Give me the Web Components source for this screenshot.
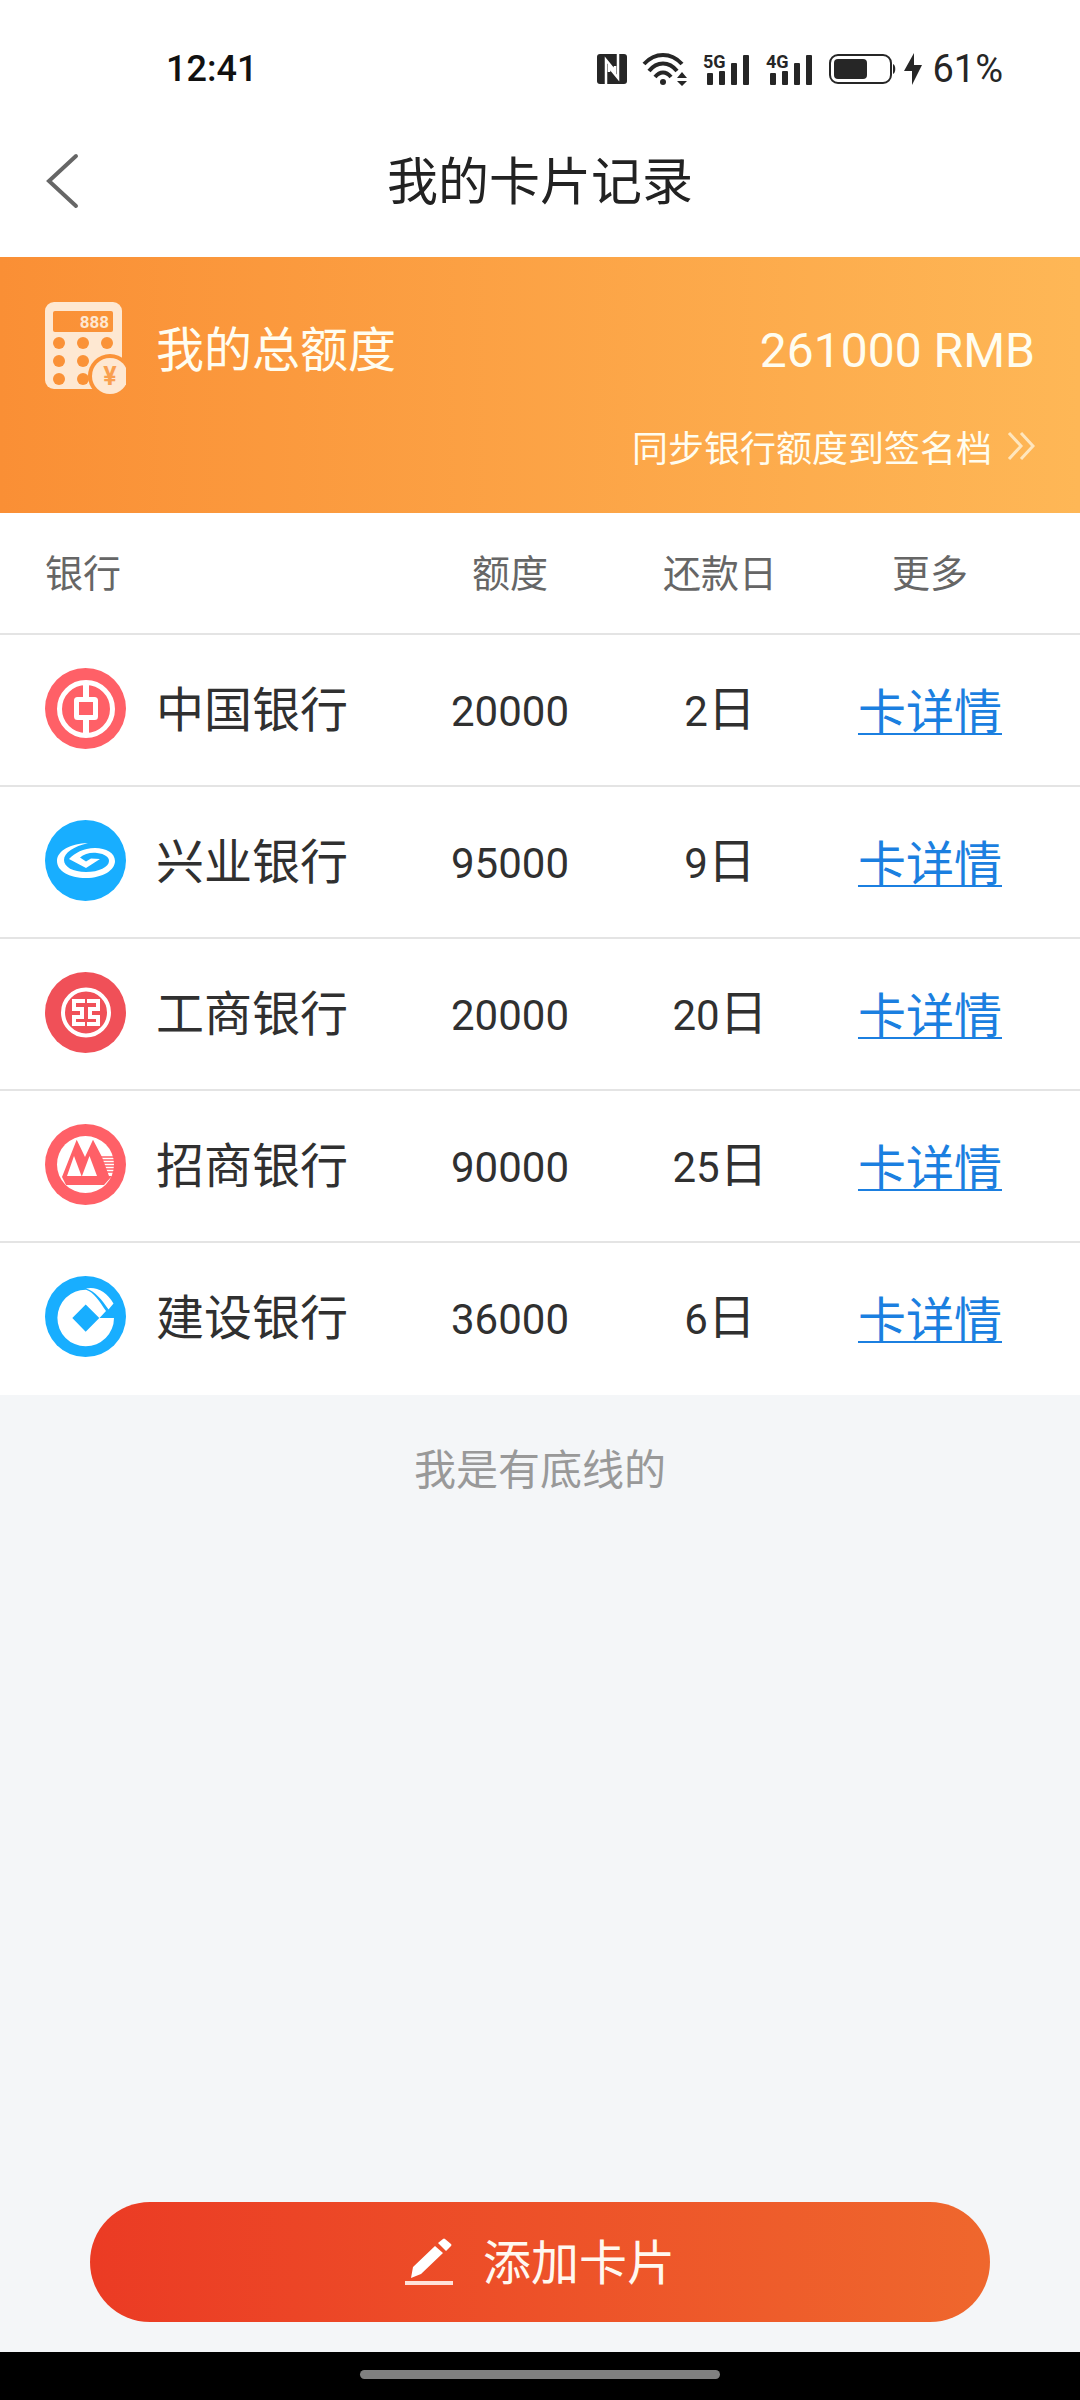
<!DOCTYPE html>
<html lang="zh-CN">
<head>
<meta charset="utf-8">
<meta name="viewport" content="width=device-width, initial-scale=1">
<title>我的卡片记录</title>
<style>
    body {
        display: flex;
        flex-direction: column;
        min-height: 100vh;
        margin: 0;
        background-color: #f4f6f8;
        color: #303030;
        font-family: "Noto Sans CJK SC", "Noto Sans", sans-serif;
    }

    main {
        flex: 1;
    }
</style>
</head>
<body>
    <status-bar time="12:41" battery="61%"></status-bar>
    <page-header>我的卡片记录</page-header>
    <main>
        <total-limit amount="261000 RMB">
            我的总额度
            <span slot="link">同步银行额度到签名档</span>
        </total-limit>
        <card-table></card-table>
        <end-note>我是有底线的</end-note>
    </main>
    <add-button>添加卡片</add-button>
    <home-bar></home-bar>

<script>
class BaseElement extends HTMLElement {
    constructor(){
        super();
        this.attachShadow({ mode: 'open' });
    }

    connectedCallback() {
        const template = document.createElement('template');
        template.innerHTML = `<style>${this.getStyles()}</style>${this.getTemplate()}`;
        this.shadowRoot.replaceChildren(template.content.cloneNode(true));
    }
}

class StatusBar extends BaseElement {
    getSignal(name) {
        return `
        <svg class="signal" width="47" height="32" viewBox="0 0 47 32">
            <text x="0" y="15">${name}</text>
            <rect x="4" y="20" width="6" height="12" rx="1"/>
            <rect x="16" y="18" width="6" height="14" rx="1"/>
            <rect x="28" y="10" width="6" height="22" rx="1"/>
            <rect x="40" y="2" width="6" height="30" rx="1"/>
        </svg>`;
    }

    getTemplate() {
        return `
        <span class="time">${this.getAttribute('time')}</span>
        <div class="icons">
            <svg width="30" height="30" viewBox="0 0 30 30">
                <rect width="30" height="30" rx="3"/>
                <path d="M9 30V6l9 11v-5M21 0v24l-9-11v5" fill="none" stroke="#fff" stroke-width="2.5"/>
            </svg>
            <svg width="44" height="32" viewBox="0 0 44 32">
                <g fill="none" stroke="#262626" stroke-width="4">
                    <path d="M1 11C12-1 28-1 39 11"/>
                    <path d="M6 18C14 8 26 8 34 18"/>
                    <path d="M12 24C17 18 23 18 28 24"/>
                </g>
                <circle cx="20" cy="29" r="3"/>
                <path d="M34 25l5-6 5 6zM34 28h10l-5 5z"/>
            </svg>
            ${this.getSignal('5G')}
            ${this.getSignal('4G')}
            <svg width="67" height="30" viewBox="0 0 67 30">
                <rect x="1" y="1" width="61" height="28" rx="8" fill="none" stroke="#262626" stroke-width="2"/>
                <rect x="5" y="5" width="33" height="20" rx="4"/>
                <path d="M64 10c3 1 3 9 0 10z"/>
            </svg>
            <svg class="charge" width="18" height="32" viewBox="0 0 18 32">
                <path d="M10 0L0 18h8v14L18 12h-8z"/>
            </svg>
            <span class="battery">${this.getAttribute('battery')}</span>
        </div>`;
    }

    getStyles() {
        return `
            :host {
                display: flex;
                justify-content: space-between;
                align-items: center;
                height: 72px;
                padding: 33px 77px 0 166px;
                background-color: #fff;
                color: #262626;
                font-family: Roboto, sans-serif;
                font-size: 36px;
                line-height: 40px;
            }

            .time {
                color: #111;
                font-weight: 500;
            }

            .icons {
                display: flex;
                align-items: center;
                gap: 16px;
            }

            .icons > svg {
                fill: #262626;
                overflow: visible;
            }

            .icons > .charge {
                margin: 0 -6px 0 -8px;
            }

            .battery {
                font-size: 38px;
            }

            .signal text {
                font-size: 18px;
                font-weight: 700;
            }`;
    }
}

class PageHeader extends BaseElement {
    getTemplate() {
        return `
        <header>
            <button type="button" aria-label="返回">
                <svg width="34" height="56" viewBox="0 0 34 56">
                    <path d="M31 3L4 28l27 25" fill="none" stroke="#666" stroke-width="4" stroke-linecap="round"/>
                </svg>
            </button>
            <h1><slot></slot></h1>
        </header>`;
    }

    getStyles() {
        return `
            :host {
                display: block;
                background-color: #fff;
                color: #222;
            }

            header {
                display: grid;
                grid-template-columns: 80px 1fr 80px;
                align-items: center;
                height: 152px;
                padding: 0 45px;
            }

            button {
                display: flex;
                padding: 0;
                border: none;
                background: none;
                cursor: pointer;
            }

            h1 {
                margin: 0;
                padding-bottom: 6px;
                font-size: 51px;
                font-weight: 400;
                line-height: 72px;
                text-align: center;
            }`;
    }
}

class TotalLimit extends BaseElement {
    getTemplate() {
        return `
        <div class="total">
            <svg width="81" height="93" viewBox="0 0 81 93" fill="#fee8d2">
                <mask id="cut">
                    <rect width="81" height="93" fill="#fff"/>
                    <rect x="8" y="9" width="60" height="21" rx="2" fill="#000"/>
                    <g fill="#000">
                        <circle cx="14" cy="41" r="6"/>
                        <circle cx="38" cy="41" r="6"/>
                        <circle cx="62" cy="41" r="6"/>
                        <circle cx="14" cy="59" r="6"/>
                        <circle cx="38" cy="59" r="6"/>
                        <circle cx="14" cy="77" r="6"/>
                        <circle cx="38" cy="77" r="6"/>
                        <circle cx="65" cy="74" r="22"/>
                    </g>
                </mask>
                <rect width="77" height="87" rx="9" mask="url(#cut)"/>
                <circle cx="65" cy="74" r="18"/>
                <text x="64" y="26" font-size="17" text-anchor="end">888</text>
                <text x="65" y="83" font-size="25" text-anchor="middle" fill="#f9a050">¥</text>
            </svg>
            <span class="label"><slot></slot></span>
            <strong>${this.getAttribute('amount')}</strong>
        </div>
        <a href="#sync">
            <slot name="link"></slot>
            <svg width="28" height="30" viewBox="0 0 28 30">
                <path d="M2 2l12 13L2 28M14 2l12 13-12 13" fill="none" stroke="#ffe6bd" stroke-width="3"/>
            </svg>
        </a>`;
    }

    getStyles() {
        return `
            :host {
                display: flex;
                flex-direction: column;
                align-items: flex-end;
                gap: 24px;
                padding: 45px 45px 40px;
                background: linear-gradient(90deg, #fa8f35, #feb756);
                color: #fffdf0;
            }

            .total {
                display: flex;
                align-items: center;
                gap: 30px;
                width: 100%;
                font-size: 48px;
                line-height: 72px;
            }

            .total text {
                font-family: Roboto, sans-serif;
                font-weight: 700;
            }

            .label {
                padding-bottom: 6px;
            }

            strong {
                margin-left: auto;
                padding-top: 4px;
                font-family: Roboto, sans-serif;
                font-weight: 400;
            }

            a {
                display: flex;
                align-items: center;
                gap: 15px;
                color: inherit;
                font-size: 36px;
                line-height: 54px;
                text-decoration: none;
            }`;
    }
}

const BANK_ICONS = {
    boc: `
        <circle cx="40.5" cy="40.5" r="40.5" fill="#ff6067"/>
        <g fill="none" stroke="#fff" stroke-width="5">
            <circle cx="41" cy="41" r="26.5"/>
            <rect x="31.5" y="31.5" width="19" height="18" rx="1"/>
            <path d="M41 13v17M41 51v18" stroke-width="6"/>
        </g>`,
    cib: `
        <circle cx="40.5" cy="40.5" r="40.5" fill="#18aeff"/>
        <path fill="#fff" d="M43 23.300C28 23 12 30 12 41C12 51 24 58 41 58C58 58 70 50 70 41C70 33 61 28 50 28C38 28 30 33 24 39L41 48L55 39L46 38.500L41 41.500L35 37.500C39 34 46 32 52 33C60 34 64 37 64 41C64 47 54 52 41 52C28 52 19 47 19 40C19 33 29 26 43 23.300Z"/>`,
    icbc: `
        <circle cx="40.5" cy="40.5" r="40.5" fill="#f05058"/>
        <g fill="none" stroke="#fff" stroke-width="4">
            <circle cx="41" cy="40.500" r="23"/>
            <path d="M40 29H29V37H37V45H29V52H40M42 29H53V37H45V45H53V52H42"/>
        </g>`,
    cmb: `
        <circle cx="40.5" cy="40.5" r="40.5" fill="#ff6067"/>
        <circle cx="40.500" cy="40.500" r="28.500" fill="#fff"/>
        <path fill="#ff6067" d="M17 53L31.700 15.700L40 33L48 15.700L57 33L64 52H67L59 61H21Z"/>
        <path fill="#fff" d="M29 32L36.500 52H22ZM44.500 32L52 52H37Z"/>
        <path stroke="#ff6067" stroke-width="1.500" d="M56 33H70M56 36H70M57 39H70M58 42H70M60 45H70M61 48H70"/>`,
    ccb: `
        <circle cx="40.5" cy="40.5" r="40.5" fill="#18aeff"/>
        <path fill="#fff" fill-rule="evenodd" d="M69 42A28.300 28.300 0 1 1 41 13.700C49 16 55 26 61 35L54.500 42ZM40.700 28.500L27.300 42L40.700 55.700L54.300 42Z"/>
        <path fill="#fff" d="M41 12.500C51 10 62 16 68.500 27.500L63.500 33.500C57 24 50 15 41 12.500Z"/>`
};

class BankIcon extends BaseElement {
    getTemplate() {
        return `<svg width="81" height="81" viewBox="0 0 81 81">${BANK_ICONS[this.getAttribute('name')]}</svg>`;
    }

    getStyles() {
        return `
            :host {
                display: flex;
            }`;
    }
}

const CARDS = [
    { icon: 'boc', bank: '中国银行', limit: 20000, day: 2 },
    { icon: 'cib', bank: '兴业银行', limit: 95000, day: 9 },
    { icon: 'icbc', bank: '工商银行', limit: 20000, day: 20 },
    { icon: 'cmb', bank: '招商银行', limit: 90000, day: 25 },
    { icon: 'ccb', bank: '建设银行', limit: 36000, day: 6 }
];

class CardTable extends BaseElement {
    getRow(card) {
        return `
        <tr>
            <td>
                <div class="bank">
                    <bank-icon name="${card.icon}"></bank-icon>
                    <span class="name">${card.bank}</span>
                </div>
            </td>
            <td><span class="number">${card.limit}</span></td>
            <td><span class="number">${card.day}</span>日</td>
            <td><a href="#${card.icon}">卡详情</a></td>
        </tr>`;
    }

    getTemplate() {
        return `
        <table>
            <thead>
                <tr>
                    <th>银行</th>
                    <th>额度</th>
                    <th>还款日</th>
                    <th>更多</th>
                </tr>
            </thead>
            <tbody>${CARDS.map(card => this.getRow(card)).join('')}</tbody>
        </table>`;
    }

    getStyles() {
        return `
            :host {
                display: block;
                background-color: #fff;
            }

            table {
                width: 100%;
                border-spacing: 0;
                table-layout: fixed;
            }

            th, td {
                box-sizing: border-box;
                width: 210px;
                height: 152px;
                padding: 0 0 4px;
                border-bottom: 2px solid #e4e4e4;
                font-size: 48px;
                line-height: 72px;
                text-align: center;
            }

            th {
                height: 122px;
                color: #666;
                font-size: 38px;
                font-weight: 400;
            }

            th:first-child, td:first-child {
                width: auto;
                padding-left: 45px;
                text-align: left;
            }

            th:last-child, td:last-child {
                width: 255px;
                padding-right: 45px;
            }

            tr:last-child td {
                border-bottom-color: transparent;
            }

            .bank {
                display: flex;
                align-items: center;
                gap: 30px;
            }

            .name {
                padding-bottom: 4px;
            }

            .number {
                font-family: Roboto, sans-serif;
                font-size: 42px;
            }

            a {
                color: #1b7fe0;
                text-decoration-thickness: 2px;
                text-underline-offset: 4px;
                text-decoration-skip-ink: none;
            }`;
    }
}

class EndNote extends BaseElement {
    getTemplate() {
        return `<p><slot></slot></p>`;
    }

    getStyles() {
        return `
            :host {
                display: block;
                padding: 40px 45px;
                color: #999;
                font-size: 42px;
                line-height: 64px;
                text-align: center;
            }

            p {
                margin: 0;
            }`;
    }
}

class AddButton extends BaseElement {
    getTemplate() {
        return `
        <button type="button">
            <svg width="48" height="48" viewBox="0 0 48 48" fill="#fff">
                <path d="M6 40l2-11L30 8l8 7-22 21zM33 5l5-4q1-1 2 0l6 5q1 1 0 2l-5 5z"/>
                <path d="M0 43h48v4H0z" fill="#ffe0d8"/>
            </svg>
            <span><slot></slot></span>
        </button>`;
    }

    getStyles() {
        return `
            :host {
                display: block;
                padding: 30px 90px;
            }

            button {
                display: flex;
                justify-content: center;
                align-items: center;
                gap: 30px;
                width: 100%;
                height: 120px;
                padding: 0;
                border: none;
                border-radius: 60px;
                background: linear-gradient(90deg, #eb3b24, #ef672d);
                color: #fff8f0;
                font-family: inherit;
                font-size: 48px;
                line-height: 72px;
                cursor: pointer;
            }

            span {
                padding-bottom: 6px;
            }`;
    }
}

class HomeBar extends BaseElement {
    getTemplate() {
        return `<div></div>`;
    }

    getStyles() {
        return `
            :host {
                display: flex;
                justify-content: center;
                padding: 18px 0 21px;
                background-color: #000;
            }

            div {
                width: calc(100% / 3);
                height: 9px;
                border-radius: 5px;
                background-color: #808080;
            }`;
    }
}

customElements.define('status-bar', StatusBar);
customElements.define('page-header', PageHeader);
customElements.define('total-limit', TotalLimit);
customElements.define('bank-icon', BankIcon);
customElements.define('card-table', CardTable);
customElements.define('end-note', EndNote);
customElements.define('add-button', AddButton);
customElements.define('home-bar', HomeBar);
</script>
</body>
</html>
